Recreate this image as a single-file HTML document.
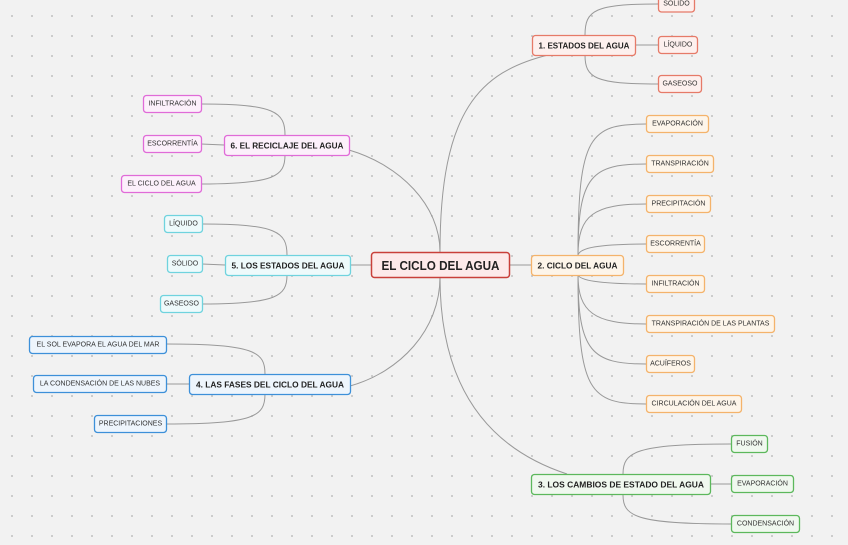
<!DOCTYPE html>
<html><head><meta charset="utf-8"><style>
html,body{margin:0;padding:0;background:#f2f2f2;}
svg{display:block;}
text{font-family:"Liberation Sans",sans-serif;text-anchor:middle;dominant-baseline:central;fill:#222;}
.c{font-size:7px;fill:#333;}
.b{font-size:8.5px;font-weight:bold;}
path{fill:none;stroke:#999;stroke-width:1;}
</style></head><body>
<svg width="848" height="545" viewBox="0 0 848 545" xmlns="http://www.w3.org/2000/svg">
<defs><pattern id="d" width="20" height="20" patternUnits="userSpaceOnUse"><circle cx="12" cy="16" r="0.9" fill="#b0b0b0"/></pattern></defs>
<rect width="848" height="545" fill="#f2f2f2"/>
<rect width="848" height="545" fill="url(#d)"/>
<path d="M440 252 C440 110 480 72 548 55"/>
<path d="M440 252 C440 205 400 165 349 150"/>
<path d="M440 277 C440 330 400 372 350 386"/>
<path d="M440 277 C440 400 500 452 567 474"/>
<path d="M509 265 L531 265"/>
<path d="M350 265 L371 265"/>
<path d="M585 35 C585 10 595 4 658 4"/>
<path d="M635 45 L658 45"/>
<path d="M585 55 C585 78 595 84 658 84"/>
<path d="M578 255 C578 135 590 124 646 124"/>
<path d="M578 255 C578 175 592 164 646 164"/>
<path d="M578 255 C578 215 594 204 646 204"/>
<path d="M578 255 C580 248 598 244 646 244"/>
<path d="M578 275 C580 280 598 284 646 284"/>
<path d="M578 275 C578 312 594 324 646 324"/>
<path d="M578 275 C578 352 592 364 646 364"/>
<path d="M578 275 C578 392 590 404 646 404"/>
<path d="M623 474 C623 452 635 444 731 444"/>
<path d="M710 484 L731 484"/>
<path d="M623 495 C623 516 635 524 731 524"/>
<path d="M265 374 C265 352 255 344 166 344"/>
<path d="M189 384 L166 384"/>
<path d="M265 394 C265 416 255 424 166 424"/>
<path d="M287 255 C287 232 277 224 202 224"/>
<path d="M225 265 L202 264"/>
<path d="M287 275 C287 296 277 304 202 304"/>
<path d="M285 135 C285 112 275 104 201 104"/>
<path d="M224 145 L201 144"/>
<path d="M285 155 C285 176 275 184 201 184"/>

<rect x="371.5" y="252.5" width="138" height="25" rx="3" fill="#fdeaea" stroke="#c9403a" stroke-width="1.5"/>
<text x="440.5" y="265.5" style="font-size:13px;font-weight:bold" textLength="118" lengthAdjust="spacingAndGlyphs">EL CICLO DEL AGUA</text>

<g fill="#fdf0ee" stroke="#e67a68" stroke-width="1.3">
<rect x="532.5" y="35.5" width="103" height="20" rx="3"/>
<rect x="658.5" y="-5" width="36" height="17" rx="3"/>
<rect x="658.5" y="36.5" width="39" height="17" rx="3"/>
<rect x="658.5" y="75.5" width="43" height="17" rx="3"/>
</g>
<text class="b" x="584" y="45.5" textLength="91" lengthAdjust="spacingAndGlyphs">1. ESTADOS DEL AGUA</text>
<text class="c" x="676.5" y="4">SÓLIDO</text>
<text class="c" x="678" y="45">LÍQUIDO</text>
<text class="c" x="680" y="84">GASEOSO</text>

<g fill="#fdf5ea" stroke="#f4b36b" stroke-width="1.3">
<rect x="531.5" y="255.5" width="92" height="20" rx="3"/>
<rect x="646.5" y="115.5" width="62" height="17" rx="3"/>
<rect x="646.5" y="155.5" width="67" height="17" rx="3"/>
<rect x="646.5" y="195.5" width="64" height="17" rx="3"/>
<rect x="646.5" y="235.5" width="58" height="17" rx="3"/>
<rect x="646.5" y="275.5" width="58" height="17" rx="3"/>
<rect x="646.5" y="315.5" width="128" height="17" rx="3"/>
<rect x="646.5" y="355.5" width="48" height="17" rx="3"/>
<rect x="646.5" y="395.5" width="95" height="17" rx="3"/>
</g>
<text class="b" x="577.5" y="265.5" textLength="80" lengthAdjust="spacingAndGlyphs">2. CICLO DEL AGUA</text>
<text class="c" x="677.5" y="124">EVAPORACIÓN</text>
<text class="c" x="680" y="164">TRANSPIRACIÓN</text>
<text class="c" x="678.5" y="204">PRECIPITACIÓN</text>
<text class="c" x="675.5" y="244">ESCORRENTÍA</text>
<text class="c" x="675.5" y="284">INFILTRACIÓN</text>
<text class="c" x="710.5" y="324">TRANSPIRACIÓN DE LAS PLANTAS</text>
<text class="c" x="670.5" y="364">ACUÍFEROS</text>
<text class="c" x="694" y="404">CIRCULACIÓN DEL AGUA</text>

<g fill="#f0f8ef" stroke="#5cb85c" stroke-width="1.3">
<rect x="531.5" y="474.5" width="179" height="20" rx="3"/>
<rect x="731.5" y="435.5" width="36" height="17" rx="3"/>
<rect x="731.5" y="475.5" width="62" height="17" rx="3"/>
<rect x="731.5" y="515.5" width="68" height="17" rx="3"/>
</g>
<text class="b" x="621" y="484.5" textLength="166" lengthAdjust="spacingAndGlyphs">3. LOS CAMBIOS DE ESTADO DEL AGUA</text>
<text class="c" x="749.5" y="444">FUSIÓN</text>
<text class="c" x="762.5" y="484">EVAPORACIÓN</text>
<text class="c" x="765.5" y="524">CONDENSACIÓN</text>

<g fill="#eef5fc" stroke="#3d90d9" stroke-width="1.3">
<rect x="189.5" y="374.5" width="161" height="20" rx="3"/>
<rect x="29.5" y="336.5" width="137" height="17" rx="3"/>
<rect x="33.5" y="375.5" width="133" height="17" rx="3"/>
<rect x="94.5" y="415.5" width="72" height="17" rx="3"/>
</g>
<text class="b" x="270" y="384.5" textLength="148" lengthAdjust="spacingAndGlyphs">4. LAS FASES DEL CICLO DEL AGUA</text>
<text class="c" x="98" y="345">EL SOL EVAPORA EL AGUA DEL MAR</text>
<text class="c" x="100" y="384">LA CONDENSACIÓN DE LAS NUBES</text>
<text class="c" x="130.5" y="424">PRECIPITACIONES</text>

<g fill="#eefafb" stroke="#6fd3de" stroke-width="1.3">
<rect x="225.5" y="255.5" width="125" height="20" rx="3"/>
<rect x="164.5" y="215.5" width="38" height="17" rx="3"/>
<rect x="167.5" y="255.5" width="35" height="17" rx="3"/>
<rect x="160.5" y="295.5" width="42" height="17" rx="3"/>
</g>
<text class="b" x="288" y="265.5" textLength="113" lengthAdjust="spacingAndGlyphs">5. LOS ESTADOS DEL AGUA</text>
<text class="c" x="183.5" y="224">LÍQUIDO</text>
<text class="c" x="185" y="264">SÓLIDO</text>
<text class="c" x="181.5" y="304">GASEOSO</text>

<g fill="#fcf0fb" stroke="#e06bd8" stroke-width="1.3">
<rect x="224.5" y="135.5" width="125" height="20" rx="3"/>
<rect x="143.5" y="95.5" width="58" height="17" rx="3"/>
<rect x="143.5" y="135.5" width="58" height="17" rx="3"/>
<rect x="121.5" y="175.5" width="80" height="17" rx="3"/>
</g>
<text class="b" x="287" y="145.5" textLength="113" lengthAdjust="spacingAndGlyphs">6. EL RECICLAJE DEL AGUA</text>
<text class="c" x="172.5" y="104">INFILTRACIÓN</text>
<text class="c" x="172.5" y="144">ESCORRENTÍA</text>
<text class="c" x="161.5" y="184">EL CICLO DEL AGUA</text>
</svg>
</body></html>
